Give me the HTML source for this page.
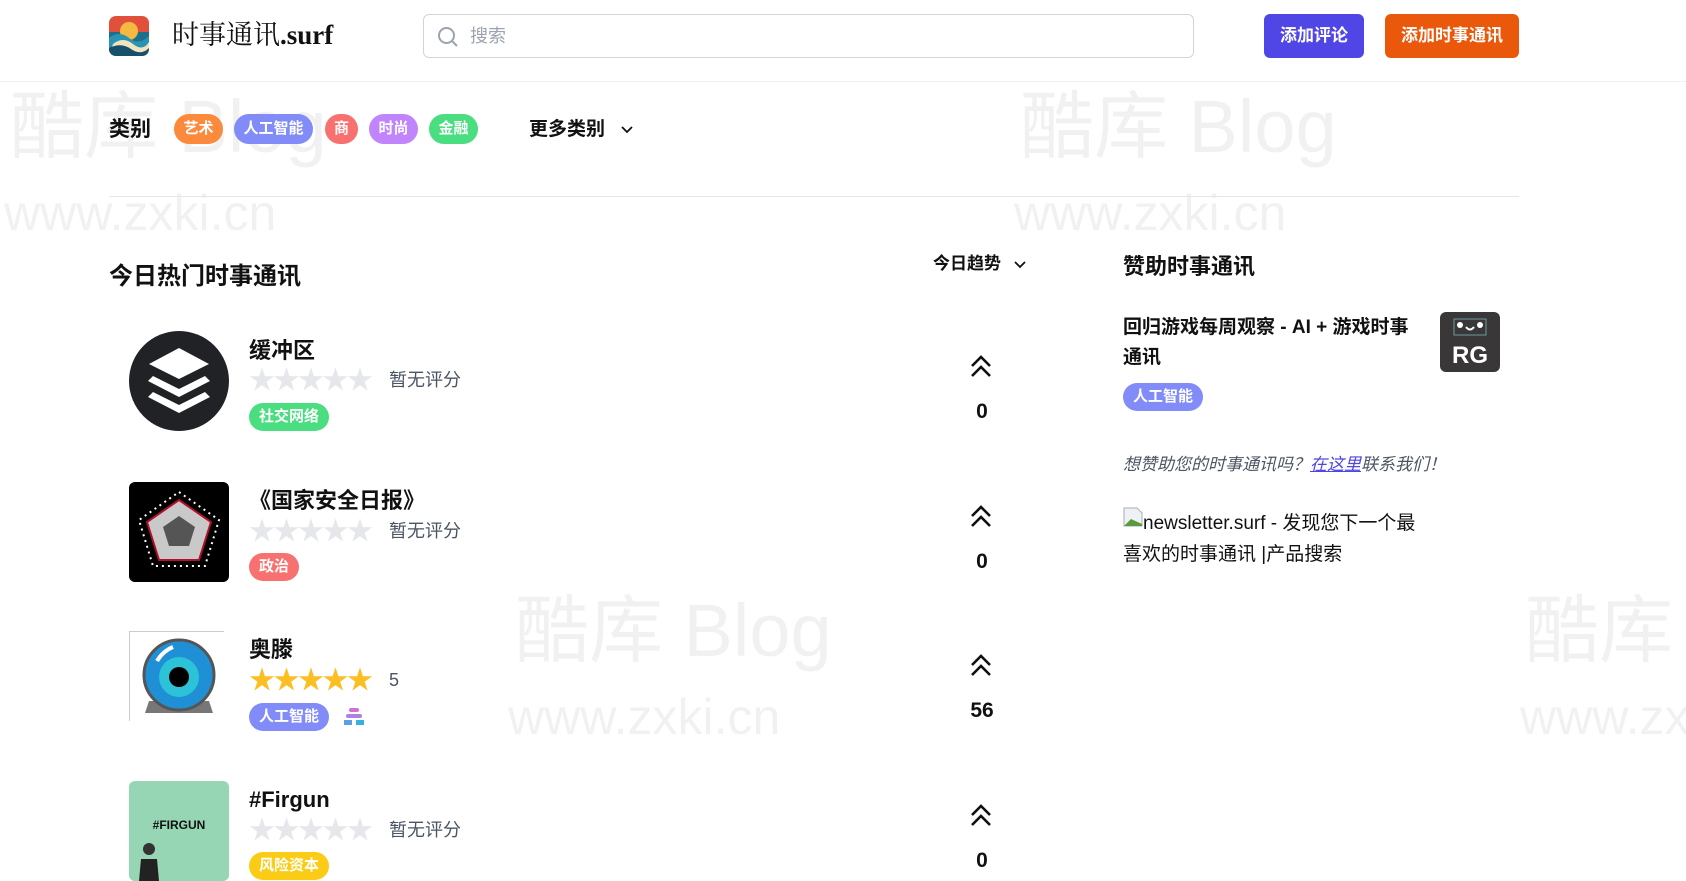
<!DOCTYPE html>
<html><head><meta charset="utf-8"><style>
*{margin:0;padding:0;box-sizing:border-box}
body{width:1686px;height:879px;overflow:hidden;background:#fff;font-family:"Liberation Sans","Noto Sans CJK SC",sans-serif;color:#111;position:relative}
.a{position:absolute;white-space:nowrap}
.wm{position:absolute;color:#000;opacity:.05;font-family:"Liberation Sans","Noto Sans CJK SC",sans-serif;line-height:1;white-space:nowrap}
.pill{position:absolute;height:30px;border-radius:15px;color:#fff;font-weight:700;font-size:15px;line-height:30px;text-align:center}
.tag{position:absolute;height:28px;border-radius:14px;color:#fff;font-weight:700;font-size:15px;line-height:28px;text-align:center}
.title{position:absolute;font-weight:700;font-size:22px;line-height:28px}
.stars{position:absolute;font-size:26px;letter-spacing:-1.5px;color:#e5e7eb;line-height:26px}
.rt{position:absolute;font-size:18px;color:#4b5563;line-height:24px}
.up{position:absolute;width:30px;text-align:center}
.cnt{position:absolute;width:40px;text-align:center;font-weight:700;font-size:21px}
</style></head><body>
<div class="wm" style="left:10px;top:90px;font-size:74px">酷库 Blog</div>
<div class="wm" style="left:4px;top:188px;font-size:50px">www.zxki.cn</div>
<div class="wm" style="left:1020px;top:90px;font-size:74px">酷库 Blog</div>
<div class="wm" style="left:1014px;top:188px;font-size:50px">www.zxki.cn</div>
<div class="wm" style="left:515px;top:594px;font-size:74px">酷库 Blog</div>
<div class="wm" style="left:508px;top:692px;font-size:50px">www.zxki.cn</div>
<div class="wm" style="left:1525px;top:594px;font-size:74px">酷库 Blog</div>
<div class="wm" style="left:1520px;top:692px;font-size:50px">www.zxki.cn</div>

<svg class="a" style="left:109px;top:16px" width="40" height="40" viewBox="0 0 40 40">
<defs><clipPath id="c"><rect width="40" height="40" rx="7"/></clipPath></defs>
<g clip-path="url(#c)"><rect width="40" height="40" fill="#e0503a"/><rect y="16" width="40" height="24" fill="#1f6f8b"/>
<circle cx="20" cy="15" r="9" fill="#f6b940"/>
<path d="M0 22 Q10 14 20 22 T40 20 V40 H0Z" fill="#2a93b3"/><path d="M4 28 Q14 20 24 28 T40 26 V40 H0Z" fill="#f1e2c0"/><path d="M0 32 Q12 26 22 33 T40 32 V40 H0Z" fill="#17506b"/></g></svg>
<div class="a" style="left:172px;top:18px;font-size:27px;line-height:34px;font-family:'Liberation Serif','Noto Serif CJK SC',serif">时事通讯<b>.surf</b></div>
<div class="a" style="left:423px;top:14px;width:771px;height:44px;border:1px solid #d1d5db;border-radius:6px"></div>
<svg class="a" style="left:437px;top:26px" width="22" height="22" viewBox="0 0 22 22" fill="none" stroke="#9ca3af" stroke-width="2"><circle cx="9.5" cy="9.5" r="7.5"/><path d="M15 15l5 5"/></svg>
<div class="a" style="left:470px;top:24px;font-size:18px;color:#9ca3af;line-height:24px">搜索</div>
<div class="a" style="left:1264px;top:14px;width:100px;height:44px;background:#4f46e5;border-radius:6px;color:#fff;font-weight:700;font-size:17px;line-height:44px;text-align:center">添加评论</div>
<div class="a" style="left:1385px;top:14px;width:134px;height:44px;background:#ea580c;border-radius:6px;color:#fff;font-weight:700;font-size:17px;line-height:44px;text-align:center">添加时事通讯</div>
<div class="a" style="left:0;top:81px;width:1686px;height:1px;background:#f1f2f4"></div>

<div class="a" style="left:109px;top:116px;font-size:21px;font-weight:700;line-height:28px">类别</div>
<div class="pill" style="left:174px;top:114px;width:49px;background:#fb8a3c">艺术</div>
<div class="pill" style="left:234px;top:114px;width:79px;background:#818cf8">人工智能</div>
<div class="pill" style="left:325px;top:114px;width:33px;background:#f87171">商</div>
<div class="pill" style="left:369px;top:114px;width:49px;background:#c084fc">时尚</div>
<div class="pill" style="left:429px;top:114px;width:49px;background:#4ade80">金融</div>
<div class="a" style="left:529px;top:117px;font-size:19px;font-weight:700;line-height:26px">更多类别</div>
<svg class="a" style="left:620px;top:122px" width="14" height="14" viewBox="0 0 14 14" fill="none" stroke="#111" stroke-width="1.8"><path d="M2 5l5 5 5-5"/></svg>
<div class="a" style="left:109px;top:196px;width:1410px;height:1px;background:#e5e7eb"></div>

<div class="a" style="left:109px;top:261px;font-size:24px;font-weight:700;line-height:32px">今日热门时事通讯</div>
<div class="a" style="left:933px;top:253px;font-size:17px;font-weight:700;line-height:22px">今日趋势</div>
<svg class="a" style="left:1013px;top:257px" width="14" height="14" viewBox="0 0 14 14" fill="none" stroke="#111" stroke-width="1.8"><path d="M2 5l5 5 5-5"/></svg>

<svg class="a" style="left:129px;top:331px" width="100" height="100" viewBox="0 0 100 100"><circle cx="50" cy="50" r="50" fill="#202226"/>
<path d="M50 17 L80 33 L50 48 L20 33Z" fill="#fff"/><path d="M24 45 L50 58 L76 45 L81 50 L50 66 L19 50Z" fill="#fff"/><path d="M24 61 L50 74 L76 61 L81 66 L50 82 L19 66Z" fill="#fff"/></svg>
<div class="title" style="left:249px;top:337px">缓冲区</div>
<div class="stars" style="left:249px;top:367px">★★★★★</div>
<div class="rt" style="left:389px;top:368px">暂无评分</div>
<div class="tag" style="left:249px;top:403px;width:80px;background:#4ade80">社交网络</div>
<svg class="up" style="left:966px;top:352px" width="30" height="28" viewBox="0 0 30 28" fill="none" stroke="#111" stroke-width="2.6"><path d="M6 14l9-9 9 9M6 24l9-9 9 9"/></svg>
<div class="cnt" style="left:962px;top:400px">0</div>

<svg class="a" style="left:129px;top:482px" width="100" height="100" viewBox="0 0 100 100"><rect width="100" height="100" rx="6" fill="#000"/>
<polygon points="50,10 90,38 76,84 24,84 10,38" fill="none" stroke="#fff" stroke-width="2" stroke-dasharray="2 4"/>
<polygon points="50,18 82,40 70,78 30,78 18,40" fill="#c9c9c9" stroke="#b0102a" stroke-width="2"/>
<polygon points="50,34 66,45 60,64 40,64 34,45" fill="#555"/></svg>
<div class="title" style="left:249px;top:487px">《国家安全日报》</div>
<div class="stars" style="left:249px;top:518px">★★★★★</div>
<div class="rt" style="left:389px;top:519px">暂无评分</div>
<div class="tag" style="left:249px;top:553px;width:50px;background:#f87171">政治</div>
<svg class="up" style="left:966px;top:502px" width="30" height="28" viewBox="0 0 30 28" fill="none" stroke="#111" stroke-width="2.6"><path d="M6 14l9-9 9 9M6 24l9-9 9 9"/></svg>
<div class="cnt" style="left:962px;top:550px">0</div>

<svg class="a" style="left:129px;top:631px" width="100" height="100" viewBox="0 0 100 100"><rect width="100" height="100" fill="#fff"/><line x1="0.5" y1="0" x2="0.5" y2="90" stroke="#ccc"/><line x1="0" y1="0.5" x2="95" y2="0.5" stroke="#ccc"/>
<path d="M20 70 L80 70 L84 82 L16 82Z" fill="#777"/>
<circle cx="50" cy="44" r="35" fill="#1f8fd6" stroke="#555" stroke-width="3"/><circle cx="50" cy="46" r="20" fill="#2cc3d8"/><circle cx="50" cy="46" r="10" fill="#000"/><path d="M28 30 Q34 20 44 16" stroke="#fff" stroke-width="4" fill="none"/></svg>
<div class="title" style="left:249px;top:636px">奥滕</div>
<div class="stars" style="left:249px;top:667px;color:#fbbf24">★★★★★</div>
<div class="rt" style="left:389px;top:668px">5</div>
<div class="tag" style="left:249px;top:703px;width:80px;background:#818cf8">人工智能</div>
<svg class="a" style="left:343px;top:706px" width="22" height="22" viewBox="0 0 22 22"><rect x="6" y="2" width="10" height="4" rx="2" fill="#d16fd6"/><rect x="3" y="8" width="16" height="4" rx="2" fill="#b080e0"/><rect x="1" y="14" width="8" height="5" fill="#5aa0e8"/><rect x="13" y="14" width="8" height="5" fill="#3ab0e0"/></svg>
<svg class="up" style="left:966px;top:651px" width="30" height="28" viewBox="0 0 30 28" fill="none" stroke="#111" stroke-width="2.6"><path d="M6 14l9-9 9 9M6 24l9-9 9 9"/></svg>
<div class="cnt" style="left:962px;top:699px">56</div>

<svg class="a" style="left:129px;top:781px" width="100" height="100" viewBox="0 0 100 100"><rect width="100" height="100" rx="6" fill="#96d6b4"/>
<text x="50" y="48" text-anchor="middle" font-family="Liberation Sans" font-weight="700" font-size="12" fill="#111">#FIRGUN</text>
<circle cx="20" cy="68" r="6" fill="#333"/><path d="M10 100 L12 78 L28 78 L30 100Z" fill="#222"/></svg>
<div class="title" style="left:249px;top:786px">#Firgun</div>
<div class="stars" style="left:249px;top:817px">★★★★★</div>
<div class="rt" style="left:389px;top:818px">暂无评分</div>
<div class="tag" style="left:249px;top:852px;width:80px;background:#facc15">风险资本</div>
<svg class="up" style="left:966px;top:801px" width="30" height="28" viewBox="0 0 30 28" fill="none" stroke="#111" stroke-width="2.6"><path d="M6 14l9-9 9 9M6 24l9-9 9 9"/></svg>
<div class="cnt" style="left:962px;top:849px">0</div>

<div class="a" style="left:1123px;top:252px;font-size:22px;font-weight:700;line-height:30px">赞助时事通讯</div>
<div class="a" style="left:1123px;top:313px;font-size:19px;font-weight:700;line-height:30px;white-space:normal;width:300px">回归游戏每周观察 - AI + 游戏时事通讯</div>
<svg class="a" style="left:1440px;top:312px" width="60" height="60" viewBox="0 0 60 60"><rect width="60" height="60" rx="6" fill="#3a3738"/>
<rect x="14" y="7" width="32" height="16" fill="none" stroke="#6a9a9a" stroke-width="1"/><circle cx="20" cy="13" r="3" fill="#fff"/><circle cx="40" cy="13" r="3" fill="#fff"/><path d="M26 15 Q30 20 34 15" stroke="#fff" stroke-width="2" fill="none"/>
<text x="30" y="51" text-anchor="middle" font-family="Liberation Sans" font-weight="700" font-size="24" fill="#fff">RG</text></svg>
<div class="tag" style="left:1123px;top:383px;width:80px;background:#818cf8">人工智能</div>
<div class="a" style="left:1123px;top:453px;font-size:17px;font-style:italic;color:#4b5563;line-height:24px">想赞助您的时事通讯吗？<span style="color:#4f46e5;text-decoration:underline">在这里</span>联系我们！</div>
<svg class="a" style="left:1123px;top:507px" width="20" height="20" viewBox="0 0 20 20"><path d="M1 1h13l5 5v13H1z" fill="#eef2f5" stroke="#aab" stroke-width="1"/><path d="M1 19 L8 12 L19 17 V19Z" fill="#5a9a3a"/></svg>
<div class="a" style="left:1123px;top:508px;font-size:19px;line-height:31px;white-space:normal;width:300px;text-indent:20px">newsletter.surf - 发现您下一个最喜欢的时事通讯 |产品搜索</div>
</body></html>
